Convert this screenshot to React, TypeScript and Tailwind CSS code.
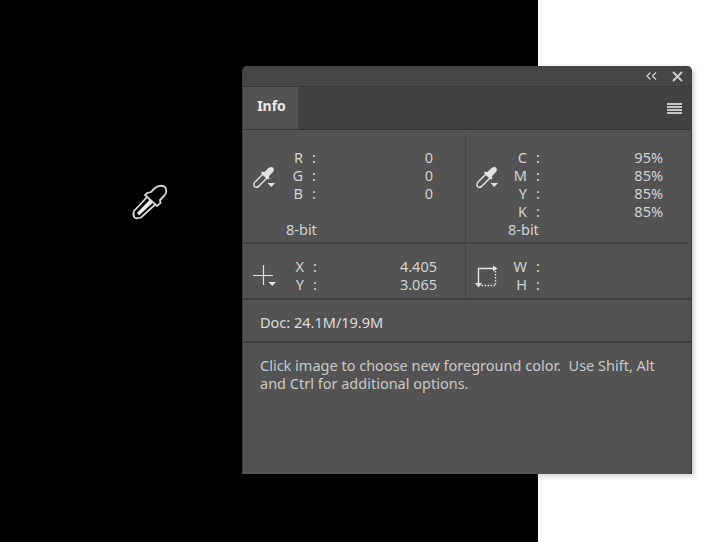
const Dropper = () => (
  <svg width="26" height="26" viewBox="0 0 26 26" fill="none">
    <path d="M2.5 16.5 L11 8 L15 12 L6.5 20.5 Q4 22 2.5 20.5 Q1.2 19 2.5 16.5 Z" stroke="#e2e2e2" strokeWidth="1.5" />
    <path d="M10 5.5 L12.5 6 L16 2.5 Q18.5 0 21 1.5 Q23 4 20.5 6.5 L17 10 L17.5 12.5 L16 13.5 L9 7 Z" fill="#e2e2e2" />
    <path d="M15.5 17 H23 L19.2 21 Z" fill="#e2e2e2" />
  </svg>
)

const CrossIcon = () => (
  <svg width="26" height="24" viewBox="0 0 26 24" fill="none">
    <path d="M0 12.5 H20 M10.5 2 V22" stroke="#e2e2e2" strokeWidth="1.2" />
    <path d="M15.5 19 H23 L19.2 23 Z" fill="#e2e2e2" />
  </svg>
)

const SizeIcon = () => (
  <svg width="26" height="24" viewBox="0 0 26 24" fill="none">
    <path d="M5.5 21 V4.5 H20" stroke="#e2e2e2" strokeWidth="1.4" />
    <path d="M20 1.5 L24.5 4.5 L20 7.5 Z M2 19 H9 L5.5 23.5 Z" fill="#e2e2e2" />
    <path d="M22.5 7 V21.5 H8" stroke="#e2e2e2" strokeWidth="1.4" strokeDasharray="1.5 1.5" />
  </svg>
)

const Row = ({ label, value, labelW, valueW }: { label: string; value?: string; labelW: string; valueW: string }) => (
  <div className="flex h-[18px] leading-[18px]">
    <span className={`${labelW} text-right`}>{label}</span>
    <span className="ml-[9px] w-[6px]">:</span>
    <span className={`${valueW} text-right`}>{value}</span>
  </div>
)

const App = () => {
  return (
    <div className="relative flex h-[542px] w-[703px] overflow-hidden bg-white font-['Noto_Sans',sans-serif]">
      <div className="h-full w-[538px] bg-black" />

      {/* cursor */}
      <svg className="absolute left-[130px] top-[182px]" width="40" height="40" viewBox="0 0 40 40" fill="none">
        <path d="M4 29 L19 13 L27 21 L11 35.5 Q7 37 4.5 35.5 Q2.5 33 4 29 Z" fill="#000" stroke="#d8d8d8" strokeWidth="1.8" />
        <path d="M7 31 L20 17.5 L23 20.5 L9 33.5 Z" fill="#eeeeee" />
        <path d="M17 11 L21 10 L25 6 Q30 2 35 5 Q38 10 34 14 L30 18 L30.5 21 L27 24 L15 13 Z" fill="#000" stroke="#d8d8d8" strokeWidth="1.8" />
      </svg>

      {/* floating panel */}
      <div className="absolute left-[242px] top-[66px] flex h-[408px] w-[450px] flex-col overflow-hidden rounded-t-[5px] border-x border-x-[#3a3a3a] bg-[#535353] text-[14.5px] text-[#d2d2d2] shadow-[2px_2px_5px_rgba(0,0,0,0.2)]">
        <div className="flex h-[21px] shrink-0 items-center justify-end border-b border-b-[#383838] bg-[#454545] pr-[8px]">
          <svg className="mr-[15px]" width="11" height="8" viewBox="0 0 11 8" fill="none">
            <path d="M4.5 0.5 L1 4 L4.5 7.5 M10 0.5 L6.5 4 L10 7.5" stroke="#d8d8d8" strokeWidth="1.2" />
          </svg>
          <svg width="11" height="11" viewBox="0 0 11 11">
            <path d="M1 1 L10 10 M10 1 L1 10" stroke="#c8c8c8" strokeWidth="2" />
          </svg>
        </div>

        <div className="flex h-[43px] shrink-0 items-stretch justify-between border-b border-b-[#383838] bg-[#424242]">
          <div className="flex w-[55px] items-start justify-center bg-[#535353] pl-[2px] pt-[9px] text-[14px] font-bold leading-[20px] text-[#e8e8e8]">
            Info
          </div>
          <svg className="mr-[9px] mt-[16px]" width="15" height="12" viewBox="0 0 15 12">
            <path d="M0 1 H15 M0 4 H15 M0 7 H15 M0 10 H15" stroke="#c4c4c4" strokeWidth="2" />
          </svg>
        </div>

        <div className="mr-[3px] flex h-[114px] shrink-0 border-b-2 border-b-[#444444]">
          <div className="mt-[4px] w-[223px] border-r border-r-[#444444] pt-[14px]">
            <div className="flex">
              <div className="ml-[9px] mt-[18px] w-[23px]">
                <Dropper />
              </div>
              <div>
                {['R', 'G', 'B'].map((c) => (
                  <Row key={c} label={c} value="0" labelW="w-[28px]" valueW="w-[115px]" />
                ))}
                <div className="h-[18px]" />
                <div className="ml-[11px] h-[18px] leading-[18px]">8-bit</div>
              </div>
            </div>
          </div>
          <div className="mt-[4px] flex-1 pt-[14px]">
            <div className="flex">
              <div className="ml-[9px] mt-[18px] w-[23px]">
                <Dropper />
              </div>
              <div>
                {['C', 'M', 'Y', 'K'].map((c, i) => (
                  <Row key={c} label={c} value={i === 0 ? '95%' : '85%'} labelW="w-[29px]" valueW="w-[121px]" />
                ))}
                <div className="ml-[10px] h-[18px] leading-[18px]">8-bit</div>
              </div>
            </div>
          </div>
        </div>

        <div className="flex h-[56px] shrink-0 border-b-2 border-b-[#3e3e3e]">
          <div className="flex w-[223px] border-r border-r-[#444444] pt-[13px]">
            <div className="ml-[10px] mt-[6px] w-[22px]">
              <CrossIcon />
            </div>
            <div>
              <Row label="X" value="4.405" labelW="w-[29px]" valueW="w-[118px]" />
              <Row label="Y" value="3.065" labelW="w-[29px]" valueW="w-[118px]" />
            </div>
          </div>
          <div className="flex flex-1 pt-[13px]">
            <div className="ml-[7px] mt-[7px] w-[25px]">
              <SizeIcon />
            </div>
            <div>
              <Row label="W" labelW="w-[29px]" valueW="w-[121px]" />
              <Row label="H" labelW="w-[29px]" valueW="w-[121px]" />
            </div>
          </div>
        </div>

        <div className="h-[43px] shrink-0 border-b-2 border-b-[#3e3e3e] pl-[17px] pt-[13px] leading-[18px] text-[#dcdcdc]">
          Doc: 24.1M/19.9M
        </div>

        <div className="whitespace-pre pl-[17px] pt-[13px] leading-[18px] text-[#c8c8c8]">
          {'Click image to choose new foreground color.  Use Shift, Alt\nand Ctrl for additional options.'}
        </div>
      </div>
    </div>
  )
}

export default App
